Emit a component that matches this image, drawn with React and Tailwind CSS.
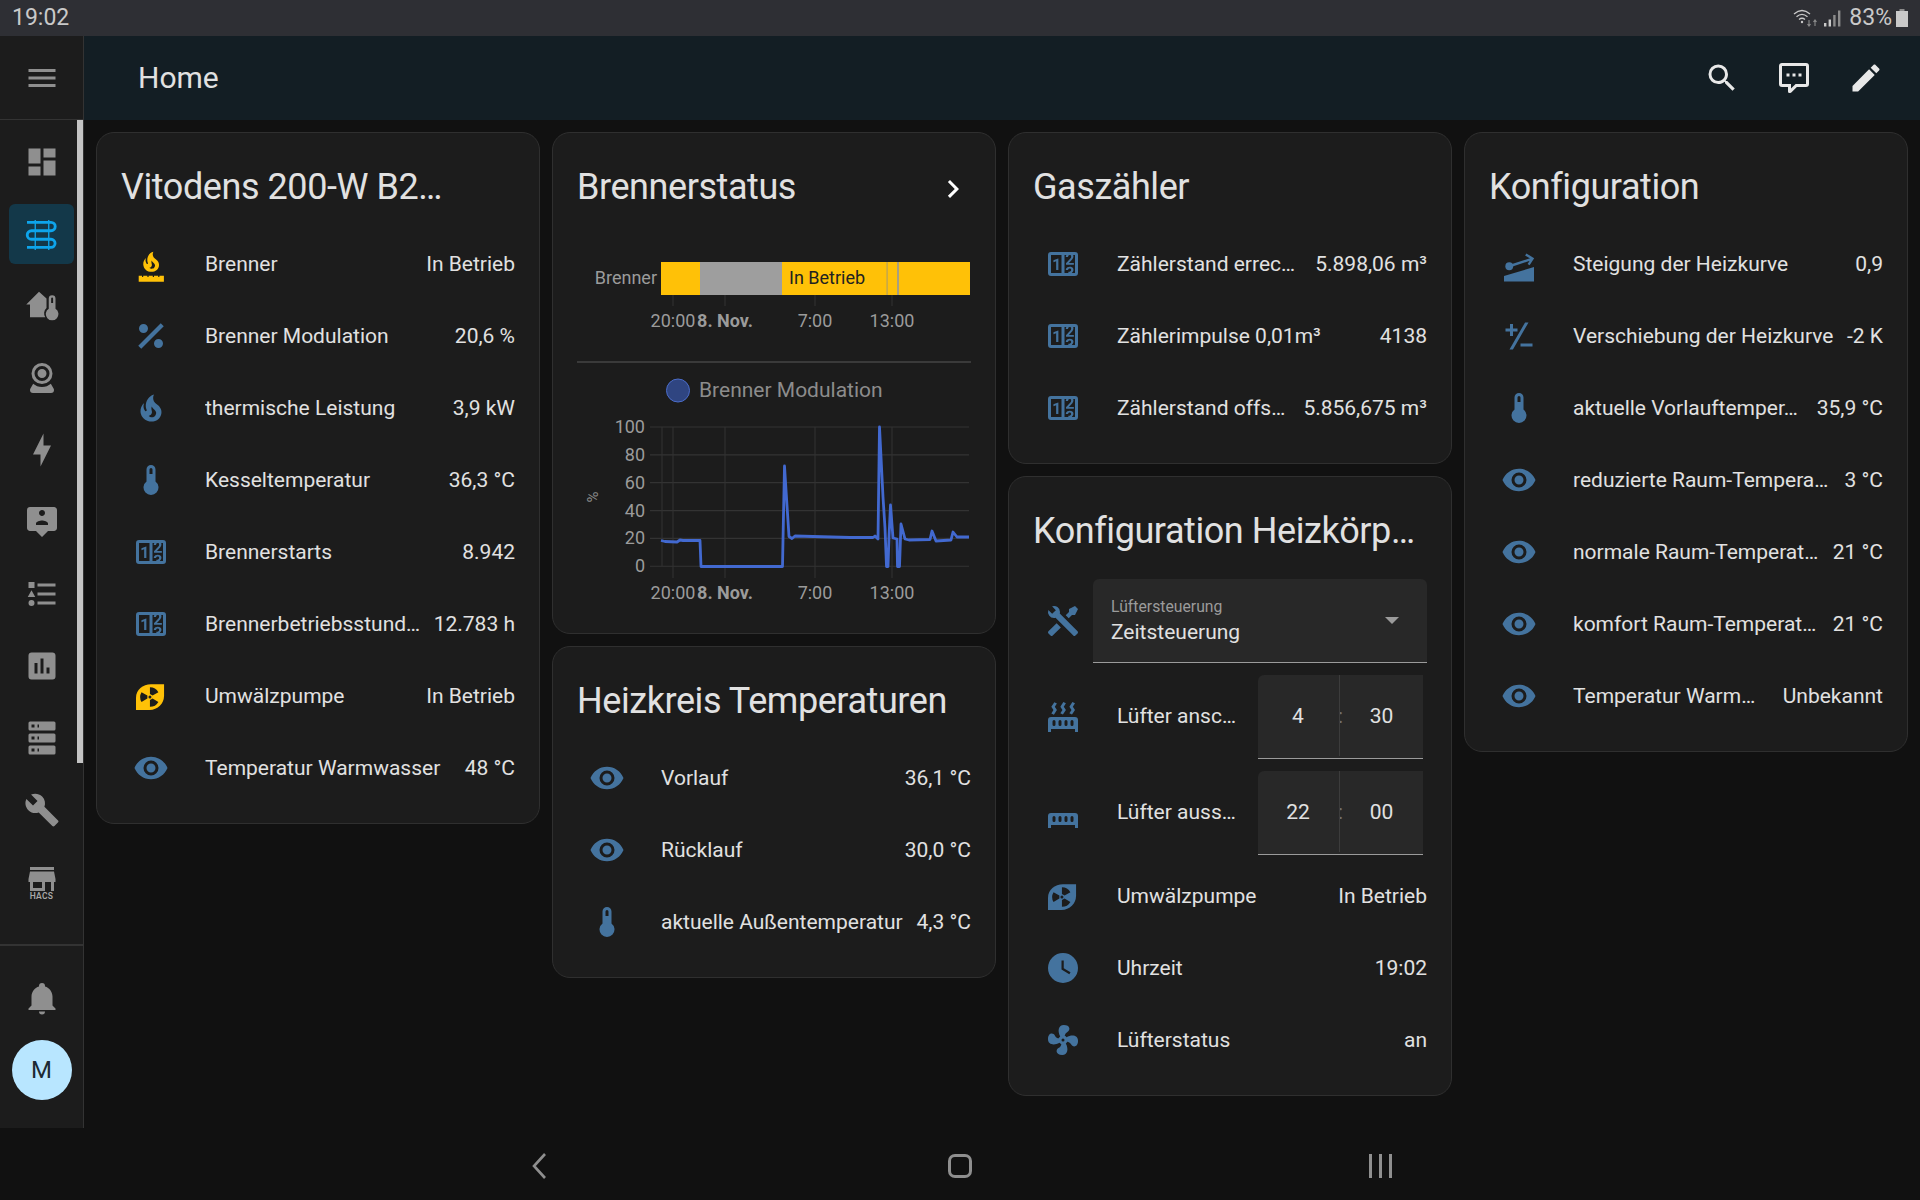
import React from "react";

// mdi icon paths
const P = {
  dashboard: "M13,3V9H21V3M13,21H21V11H13M3,21H11V15H3M3,13H11V3H3V13Z",
  webcam: "M12,2A7,7 0 0,1 19,9A7,7 0 0,1 12,16A7,7 0 0,1 5,9A7,7 0 0,1 12,2M12,4A5,5 0 0,0 7,9A5,5 0 0,0 12,14A5,5 0 0,0 17,9A5,5 0 0,0 12,4M12,6A3,3 0 0,1 15,9A3,3 0 0,1 12,12A3,3 0 0,1 9,9A3,3 0 0,1 12,6M6,22A2,2 0 0,1 4,20C4,19.62 4.1,19.27 4.29,18.97L6.11,15.81C7.69,17.17 9.75,18 12,18C14.25,18 16.31,17.17 17.89,15.81L19.71,18.97C19.9,19.27 20,19.62 20,20A2,2 0 0,1 18,22H6Z",
  bolt: "M11 15H6L13 1V9H18L11 23V15Z",
  tooltipAccount: "M2 4C2 2.89 2.9 2 4 2H20C21.11 2 22 2.9 22 4V16C22 17.11 21.11 18 20 18H16L12 22L8 18H4C2.9 18 2 17.11 2 16V4M16 14V13C16 11.67 13.33 11 12 11S8 11.67 8 13V14H16M12 4C10.9 4 10 4.9 10 6S10.9 8 12 8 14 7.11 14 6 13.11 4 12 4Z",
  listType: "M5,9.5L7.5,14H2.5L5,9.5M3,4H7V8H3V4M5,20A2,2 0 0,0 7,18A2,2 0 0,0 5,16A2,2 0 0,0 3,18A2,2 0 0,0 5,20M9,5V7H21V5H9M9,19H21V17H9V19M9,13H21V11H9V13Z",
  chartBox: "M9 17H7V10H9V17M13 17H11V7H13V17M17 17H15V13H17V17M19 3H5C3.89 3 3 3.89 3 5V19A2 2 0 0 0 5 21H19A2 2 0 0 0 21 19V5C21 3.89 20.1 3 19 3Z",
  server: "M4,1H20A1,1 0 0,1 21,2V6A1,1 0 0,1 20,7H4A1,1 0 0,1 3,6V2A1,1 0 0,1 4,1M4,9H20A1,1 0 0,1 21,10V14A1,1 0 0,1 20,15H4A1,1 0 0,1 3,14V10A1,1 0 0,1 4,9M4,17H20A1,1 0 0,1 21,18V22A1,1 0 0,1 20,23H4A1,1 0 0,1 3,22V18A1,1 0 0,1 4,17M9,5H10V3H9V5M9,13H10V11H9V13M9,21H10V19H9V21M5,3V5H7V3H5M5,11V13H7V11H5M5,19V21H7V19H5Z",
  wrench: "M22.7,19L13.6,9.9C14.5,7.6 14,4.9 12.1,3C10.1,1 7.1,0.6 4.7,1.7L9,6L6,9L1.6,4.7C0.4,7.1 0.9,10.1 2.9,12.1C4.8,14 7.5,14.5 9.8,13.6L18.9,22.7C19.3,23.1 19.9,23.1 20.3,22.7L22.6,20.4C23.1,20 23.1,19.3 22.7,19Z",
  store: "M12,18H6V14H12M21,14V12L20,7H4L3,12V14H4V20H14V14H18V20H20V14M20,4H4V6H20V4Z",
  bell: "M21,19V20H3V19L5,17V11C5,7.9 7.03,5.17 10,4.29C10,4.19 10,4.1 10,4A2,2 0 0,1 12,2A2,2 0 0,1 14,4C14,4.1 14,4.19 14,4.29C16.97,5.17 19,7.9 19,11V17L21,19M14,21A2,2 0 0,1 12,23A2,2 0 0,1 10,21",
  menu: "M3,6H21V8H3V6M3,11H21V13H3V11M3,16H21V18H3V16Z",
  magnify: "M9.5,3A6.5,6.5 0 0,1 16,9.5C16,11.11 15.41,12.59 14.44,13.73L14.71,14H15.5L20.5,19L19,20.5L14,15.5V14.71L13.73,14.44C12.59,15.41 11.11,16 9.5,16A6.5,6.5 0 0,1 3,9.5A6.5,6.5 0 0,1 9.5,3M9.5,5C7,5 5,7 5,9.5C5,12 7,14 9.5,14C12,14 14,12 14,9.5C14,7 12,5 9.5,5Z",
  comment: "M9,22A1,1 0 0,1 8,21V18H4A2,2 0 0,1 2,16V4C2,2.89 2.9,2 4,2H20A2,2 0 0,1 22,4V16A2,2 0 0,1 20,18H13.9L10.2,21.71C10,21.9 9.75,22 9.5,22H9M10,16V19.08L13.08,16H20V4H4V16H10M17,11H15V9H17V11M13,11H11V9H13V11M9,11H7V9H9V11Z",
  pencil: "M20.71,7.04C21.1,6.65 21.1,6 20.71,5.63L18.37,3.29C18,2.9 17.35,2.9 16.96,3.29L15.12,5.12L18.87,8.87M3,17.25V21H6.75L17.81,9.93L14.06,6.18L3,17.25Z",
  chevron: "M8.59,16.58L13.17,12L8.59,7.41L10,6L16,12L10,18L8.59,16.58Z",
  percent: "M18.5,3.5L3.5,18.5L5.5,20.5L20.5,5.5M7,4A3,3 0 0,0 4,7A3,3 0 0,0 7,10A3,3 0 0,0 10,7A3,3 0 0,0 7,4M17,14A3,3 0 0,0 14,17A3,3 0 0,0 17,20A3,3 0 0,0 20,17A3,3 0 0,0 17,14Z",
  fire: "M17.66 11.2C17.43 10.9 17.15 10.64 16.89 10.38C16.22 9.78 15.46 9.35 14.82 8.72C13.33 7.26 13 4.85 13.95 3C13 3.23 12.17 3.75 11.46 4.32C8.87 6.4 7.85 10.07 9.07 13.22C9.11 13.32 9.15 13.42 9.15 13.55C9.15 13.77 9 13.97 8.8 14.05C8.57 14.15 8.33 14.09 8.14 13.93C8.08 13.88 8.04 13.83 8 13.76C6.87 12.33 6.69 10.28 7.45 8.64C5.78 10 4.87 12.3 5 14.47C5.06 14.97 5.12 15.47 5.29 15.97C5.43 16.57 5.7 17.17 6 17.7C7.08 19.43 8.95 20.67 10.96 20.92C13.1 21.19 15.39 20.8 17.03 19.32C18.86 17.66 19.5 15 18.56 12.72L18.43 12.46C18.22 12 17.66 11.2 17.66 11.2M14.5 17.5C14.22 17.74 13.76 18 13.4 18.1C12.28 18.5 11.16 17.94 10.5 17.28C11.69 17 12.4 16.12 12.61 15.23C12.78 14.43 12.46 13.77 12.33 13C12.21 12.26 12.23 11.63 12.5 10.94C12.69 11.32 12.89 11.7 13.13 12C13.9 13 15.11 13.44 15.37 14.8C15.41 14.94 15.43 15.08 15.43 15.23C15.46 16.05 15.1 16.95 14.5 17.5H14.5Z",
  thermometer: "M15 13V5A3 3 0 0 0 9 5V13A5 5 0 1 0 15 13M12 4A1 1 0 0 1 13 5V8H11V5A1 1 0 0 1 12 4Z",
  counter: "M4,4H20A2,2 0 0,1 22,6V18A2,2 0 0,1 20,20H4A2,2 0 0,1 2,18V6A2,2 0 0,1 4,4M4,6V18H11V6H4M20,18V6H18.76C19,6.54 18.95,7.07 18.95,7.13C18.88,7.8 18.41,8.5 18.24,8.75L15.91,11.3L19.23,11.28L19.24,12.5L14.04,12.47L14,11.47C14,11.47 17.05,8.24 17.2,7.95C17.34,7.67 17.91,6 16.5,6C15.27,6.05 15.41,7.3 15.41,7.3L13.87,7.31C13.87,7.31 13.88,6.65 14.25,6H13V18H15.58L15.57,17.14L16.54,17.13C16.54,17.13 17.45,16.97 17.46,16.08C17.5,15.08 16.65,15.08 16.5,15.08C16.37,15.08 15.43,15.13 15.43,15.95H13.91C13.91,15.95 13.95,13.89 16.5,13.89C19.1,13.89 18.96,15.91 18.96,15.91C18.96,15.91 19,17.16 17.85,17.63L18.37,18H20M8.92,16H7.42V10.2L5.62,10.76V9.53L8.76,8.41H8.92V16Z",
  eye: "M12,9A3,3 0 0,0 9,12A3,3 0 0,0 12,15A3,3 0 0,0 15,12A3,3 0 0,0 12,9M12,17A5,5 0 0,1 7,12A5,5 0 0,1 12,7A5,5 0 0,1 17,12A5,5 0 0,1 12,17M12,4.5C7,4.5 2.73,7.61 1,12C2.73,16.39 7,19.5 12,19.5C17,19.5 21.27,16.39 23,12C21.27,7.61 17,4.5 12,4.5Z",
  tools: "M21.71 20.29L20.29 21.71A1 1 0 0 1 18.88 21.71L7 9.85A3.81 3.81 0 0 1 6 10A4 4 0 0 1 2.22 4.7L4.76 7.24L5.29 6.71L6.71 5.29L7.24 4.76L4.7 2.22A4 4 0 0 1 10 6A3.81 3.81 0 0 1 9.85 7L21.71 18.88A1 1 0 0 1 21.71 20.29M2.29 18.88A1 1 0 0 0 2.29 20.29L3.71 21.71A1 1 0 0 0 5.12 21.71L10.59 16.25L7.76 13.42M20 2L16 4V6L13.83 8.17L15.83 10.17L18 8H20L22 4Z",
  radiator: "M7.95,3L6.53,5.19L7.95,7.4H7.94L5.95,10.5L4.22,9.6L5.64,7.39L4.22,5.19L6.22,2.09L7.95,3M13.95,2.89L12.53,5.1L13.95,7.3L13.94,7.31L11.95,10.4L10.22,9.5L11.64,7.3L10.22,5.1L12.22,2L13.95,2.89M20,2.89L18.56,5.1L20,7.3V7.31L18,10.4L16.25,9.5L17.67,7.3L16.25,5.1L18.25,2L20,2.89M2,22V14A2,2 0 0,1 4,12H20A2,2 0 0,1 22,14V22H20V20H4V22H2M6,14A1,1 0 0,0 5,15V17A1,1 0 0,0 6,18A1,1 0 0,0 7,17V15A1,1 0 0,0 6,14M10,14A1,1 0 0,0 9,15V17A1,1 0 0,0 10,18A1,1 0 0,0 11,17V15A1,1 0 0,0 10,14M14,14A1,1 0 0,0 13,15V17A1,1 0 0,0 14,18A1,1 0 0,0 15,17V15A1,1 0 0,0 14,14M18,14A1,1 0 0,0 17,15V17A1,1 0 0,0 18,18A1,1 0 0,0 19,17V15A1,1 0 0,0 18,14Z",
  radiatorOff: "M2,22V14A2,2 0 0,1 4,12H20A2,2 0 0,1 22,14V22H20V20H4V22H2M6,14A1,1 0 0,0 5,15V17A1,1 0 0,0 6,18A1,1 0 0,0 7,17V15A1,1 0 0,0 6,14M10,14A1,1 0 0,0 9,15V17A1,1 0 0,0 10,18A1,1 0 0,0 11,17V15A1,1 0 0,0 10,14M14,14A1,1 0 0,0 13,15V17A1,1 0 0,0 14,18A1,1 0 0,0 15,17V15A1,1 0 0,0 14,14M18,14A1,1 0 0,0 17,15V17A1,1 0 0,0 18,18A1,1 0 0,0 19,17V15A1,1 0 0,0 18,14Z",
  clock: "M12,2A10,10 0 0,0 2,12A10,10 0 0,0 12,22A10,10 0 0,0 22,12A10,10 0 0,0 12,2M16.2,16.2L11,13V7H12.5V12.2L17,14.9L16.2,16.2Z",
  fan: "M12,11A1,1 0 0,0 11,12A1,1 0 0,0 12,13A1,1 0 0,0 13,12A1,1 0 0,0 12,11M12.5,2C17,2 17.11,5.57 14.75,6.75C13.76,7.24 13.32,8.29 13.13,9.22C13.61,9.42 14.03,9.73 14.35,10.13C18.05,8.13 22.03,8.92 22.03,12.5C22.03,17 18.46,17.1 17.28,14.73C16.78,13.74 15.72,13.3 14.79,13.11C14.59,13.59 14.28,14 13.88,14.34C15.87,18.03 15.08,22 11.5,22C7,22 6.91,18.42 9.27,17.24C10.25,16.75 10.69,15.71 10.89,14.79C10.4,14.59 9.97,14.27 9.65,13.87C5.96,15.85 2,15.07 2,11.5C2,7 5.56,6.89 6.74,9.26C7.24,10.25 8.29,10.68 9.22,10.87C9.41,10.39 9.73,9.97 10.14,9.65C8.15,5.96 8.94,2 12.5,2Z",
  plusMinus: "M3,7H6V4H8V7H11V9H8V12H6V9H3V7M21,17V19H13V17H21M16.04,3H18.35L7.96,21H5.65L16.04,3Z",
};

function Icon({ d, className = "", children }) {
  return (
    <svg viewBox="0 0 24 24" fill="currentColor" className={"block w-9 h-9 " + className}>
      {d && <path d={d} />}
      {children}
    </svg>
  );
}

const HeatingCoil = ({ className }) => (
  <Icon className={className}>
    <path
      d="M2 4.2H18a2.8 2.8 0 0 1 0 5.6H5a2.85 2.85 0 0 0 0 5.7H18a2.7 2.7 0 0 1 0 5.4H2"
      fill="none"
      stroke="currentColor"
      strokeWidth="1.9"
    />
    <path d="M7.5 2.6V22.6M16.5 2.6V22.6" fill="none" stroke="currentColor" strokeWidth="0.9" />
  </Icon>
);

const HomeThermometer = ({ className }) => (
  <Icon className={className}>
    <path d="M10 2.5L1.5 11H4V19.5H14.2A4.6 4.6 0 0 1 15 13.4V7Z" />
    <path
      d="M16.5 13.8V7a2.25 2.25 0 0 1 4.5 0V13.8A4.2 4.2 0 1 1 16.5 13.8ZM18.1 7V10H19.4V7a.65 .65 0 0 0 -1.3 0Z"
      fillRule="evenodd"
    />
  </Icon>
);

const GasBurner = ({ className }) => (
  <Icon className={className}>
    <g transform="translate(3.1 1.5) scale(.75)">
      <path d={P.fire} />
    </g>
    <path d="M3.8 23.8V19.8H6V20.7H6.8V19.8H9.6V20.7H10.4V19.8H13.2V20.7H14V19.8H16.8V20.7H17.6V19.8H20.6V23.8Z" />
  </Icon>
);

const Pump = ({ className }) => (
  <Icon className={className}>
    <path d="M20.7 4.2V12C20.7 17 16.5 21.3 11 21.3H2V13C2 8 6.5 4.2 12 4.2Z" />
    <g fill="#1c1c1c" transform="translate(-0.7 0.7)">
      <path d="M10.27 11L6.37 8.75A6.5 6.5 0 0 0 6.37 15.25L10.27 13Z" />
      <path d="M12 10L12 5.5A6.5 6.5 0 0 1 17.63 8.75L13.73 11Z" />
      <path d="M13.73 13L17.63 15.25A6.5 6.5 0 0 1 12 18.5L12 14Z" />
      <circle cx="12" cy="12" r="1" />
    </g>
  </Icon>
);

const Slope = ({ className }) => (
  <Icon className={className}>
    <path d="M2 23.7V20L22 14V23.7Z" />
    <circle cx="5.5" cy="13.5" r="2.6" />
    <path d="M5.5 13.5L20.5 8.6M16.5 5.6L21 8.4L18.4 12.4" fill="none" stroke="currentColor" strokeWidth="1.6" />
  </Icon>
);

const navItems = [
  { d: P.dashboard },
  { Comp: HeatingCoil, active: true },
  { Comp: HomeThermometer },
  { d: P.webcam },
  { d: P.bolt },
  { d: P.tooltipAccount },
  { d: P.listType },
  { d: P.chartBox },
  { d: P.server },
  { d: P.wrench },
];

const blue = "text-[#44739e]";
const gold = "text-[#ffc107]";

function Row({ icon, Comp, name, value, color = blue }) {
  return (
    <div className="flex items-center h-[60px] mb-3 last:mb-0">
      <div className={"w-[60px] flex justify-center shrink-0 " + color}>
        {Comp ? <Comp /> : <Icon d={icon} />}
      </div>
      <div className="ml-6 flex-1 min-w-0 truncate">{name}</div>
      {value && <div className="ml-3 whitespace-nowrap text-right">{value}</div>}
    </div>
  );
}

function Card({ title, chevron, children }) {
  return (
    <div className="bg-[#1c1c1c] border border-[#2f2f2f] rounded-[18px] px-6 pb-[25px] text-[21px] leading-[30px] text-[#e1e1e1]">
      <div className="h-[101px] pt-[18px] flex items-start justify-between">
        <div className="h-[72px] leading-[72px] text-[36px] tracking-[-0.012em] whitespace-nowrap">{title}</div>
        {chevron && (
          <div className="h-[72px] flex items-center">
            <Icon d={P.chevron} className="text-white mt-1" />
          </div>
        )}
      </div>
      {children}
    </div>
  );
}

function TimeRow({ icon, name, h, m, className = "" }) {
  return (
    <div className={"flex items-center h-[84px] " + className}>
      <div className={"w-[60px] flex justify-center shrink-0 " + blue}>
        <Icon d={icon} />
      </div>
      <div className="ml-6 flex-1 min-w-0 truncate -mt-[2px]">{name}</div>
      <div className="w-[165px] h-[84px] mr-1 pb-[2px] bg-[#282828] rounded-tl-[6px] border-b border-[#9b9b9b] flex items-center">
        <span className="w-[80px] text-center">{h}</span>
        <span className="w-[2px] text-[#6f6f6f]">:</span>
        <span className="h-full w-px bg-[#3c3c3c] ml-[-1px]"></span>
        <span className="flex-1 text-center">{m}</span>
      </div>
    </div>
  );
}

// Kurve in Koordinaten des Screenshots
const curve = [
  [661, 540.5], [665, 541.5], [677, 542], [680, 540], [683, 540.5], [700, 540.5], [701, 566.5], [782.5, 566.5],
  [783, 540], [784.5, 466], [786, 490], [789, 536.5], [792, 538.5], [795, 536], [813, 536.5], [850, 537.5],
  [873, 537.5], [875, 536], [878, 539], [879.5, 427], [883, 497], [885, 528], [886.5, 566.5], [888, 566.5],
  [889, 537], [890.5, 505], [893, 538], [897, 539], [897.5, 566.5], [899.5, 566.5], [901, 524], [905, 539],
  [909, 540], [930, 539.5], [932, 531], [936, 541], [951, 540], [953, 532], [957, 537], [969, 537],
];

const ticks = [
  { x: 673, label: "20:00" },
  { x: 725, label: "8. Nov.", bold: true },
  { x: 815, label: "7:00" },
  { x: 892, label: "13:00" },
];

function TimelineChart() {
  return (
    <svg viewBox="577 234 394 127" className="block w-[394px] h-[127px] font-[Roboto,sans-serif]">
      <text x="657" y="284" textAnchor="end" fontSize="18" fill="#9b9b9b">Brenner</text>
      <rect x="661" y="262" width="309" height="33" fill="#ffc107" />
      <rect x="700" y="262" width="82" height="33" fill="#9e9e9e" />
      <rect x="886.5" y="262" width="1.2" height="33" fill="#b5a05c" />
      <rect x="897" y="262" width="2" height="33" fill="#a89f80" />
      <text x="789" y="284" fontSize="18" fill="#212121">In Betrieb</text>
      {ticks.map((t) => (
        <g key={t.label}>
          <line x1={t.x} x2={t.x} y1="295" y2="306" stroke="#333" />
          <text x={t.x} y="327" textAnchor="middle" fontSize="18" fill="#9b9b9b" fontWeight={t.bold ? 700 : 400}>
            {t.label}
          </text>
        </g>
      ))}
    </svg>
  );
}

function LineChart() {
  const yTicks = [100, 80, 60, 40, 20, 0];
  return (
    <svg viewBox="577 363 394 245" className="block w-[394px] h-[245px] font-[Roboto,sans-serif]">
      <circle cx="678" cy="390.5" r="11.5" fill="#2f4581" stroke="#4b6cc8" strokeWidth="1" />
      <text x="699" y="396.5" fontSize="21" fill="#8c8c8c">Brenner Modulation</text>
      {yTicks.map((v, i) => {
        const y = 427 + i * 27.85;
        return (
          <g key={v}>
            <line x1="650" x2="969" y1={y} y2={y} stroke="#333" strokeWidth="1.2" />
            <text x="645" y={y + 6} textAnchor="end" fontSize="18" fill="#9b9b9b">{v}</text>
          </g>
        );
      })}
      <line x1="662" x2="662" y1="427" y2="566" stroke="#333" />
      {ticks.map((t) => (
        <g key={t.label}>
          <line x1={t.x} x2={t.x} y1="427" y2="578" stroke="#333" />
          <text x={t.x} y="599" textAnchor="middle" fontSize="18" fill="#9b9b9b" fontWeight={t.bold ? 700 : 400}>
            {t.label}
          </text>
        </g>
      ))}
      <text transform="translate(598 497) rotate(-90)" textAnchor="middle" fontSize="15" fill="#8c8c8c">%</text>
      <polyline
        points={curve.map((p) => p.join(",")).join(" ")}
        fill="none"
        stroke="#4269d0"
        strokeWidth="2.8"
        strokeLinejoin="round"
      />
    </svg>
  );
}

function Sidebar() {
  return (
    <div className="w-[84px] shrink-0 bg-[#1c1c1c] border-r border-[#333] flex flex-col text-[#8f8f8f]">
      <div className="h-[84px] shrink-0 border-b border-[#333] flex items-center justify-center">
        <Icon d={P.menu} />
      </div>
      <div className="relative flex-1 pt-3 border-b-2 border-[#333]">
        {navItems.map((n, i) => (
          <div
            key={i}
            className={
              "mx-[9px] h-[60px] mb-3 rounded-[6px] flex items-center justify-center " +
              (n.active ? "bg-[#133849] text-[#0ea5ec]" : "")
            }
          >
            {n.Comp ? <n.Comp /> : <Icon d={n.d} />}
          </div>
        ))}
        <div className="mx-[9px] h-[60px] flex flex-col items-center pt-[9px]">
          <Icon d={P.store} />
          <span className="-mt-[6px] text-[8.5px] leading-[10px] font-semibold tracking-[0.3px] text-[#a8a8a8]">HACS</span>
        </div>
        <div className="absolute right-0 top-0 w-[6px] h-[643px] bg-[#c4c4c4]"></div>
      </div>
      <div className="h-[182px] shrink-0 flex flex-col items-center pt-[23px]">
        <Icon d={P.bell} className="mt-[11px]" />
        <div className="mt-[24px] w-[60px] h-[60px] rounded-full bg-[#b8e6ff] text-[#1c2a33] text-[24px] flex items-center justify-center">
          M
        </div>
      </div>
    </div>
  );
}

export default function App() {
  return (
    <div className="w-[1920px] h-[1200px] flex flex-col overflow-hidden bg-[#111111] font-[Roboto,sans-serif]">
      {/* status bar */}
      <div className="h-9 shrink-0 bg-[#2e2f34] flex items-center justify-between pl-3 pr-3 text-[23px] text-[#c9c9c9]">
        <span>19:02</span>
        <div className="flex items-center">
          <svg viewBox="0 0 26 20" className="w-[26px] h-[20px]" fill="none" stroke="#c9c9c9" strokeWidth="1.3">
            <path d="M1 6Q9 -1 17 6M3.5 8.8Q9 4 14.5 8.8M6 11.5Q9 9 12 11.5" />
            <circle cx="9" cy="14" r="1.2" fill="#c9c9c9" stroke="none" />
            <path d="M16 12V18M14.5 16L16 18L17.5 16M22 18V12M20.5 14L22 12L23.5 14" stroke="#8c8c8c" strokeWidth="1.1" />
          </svg>
          <svg viewBox="0 0 17 17" className="w-[17px] h-[17px] ml-[5px]" fill="#c9c9c9">
            <rect x="0" y="13" width="2.4" height="3.5" />
            <rect x="4.6" y="9.5" width="2.4" height="7" />
            <rect x="9.2" y="5" width="2.4" height="11.5" fill="#8c8c8c" />
            <rect x="14" y="0.5" width="2.4" height="16" fill="#8c8c8c" />
          </svg>
          <span className="ml-2">83%</span>
          <svg viewBox="0 0 12 18" className="w-[12px] h-[18px] ml-[4px]" fill="#c9c9c9">
            <rect x="3.5" y="0" width="5" height="2" fill="#8c8c8c" />
            <rect x="0" y="2" width="12" height="16" />
          </svg>
        </div>
      </div>

      <div className="flex-1 min-h-0 flex">
        <Sidebar />
        <div className="flex-1 min-w-0 flex flex-col">
          <div className="h-[84px] shrink-0 bg-[#131e24] flex items-center pl-[54px] pr-[36px] text-[#e1e1e1]">
            <div className="flex-1 text-[30px] -mt-[2px]">Home</div>
            <div className="flex items-center gap-9">
              <Icon d={P.magnify} className="text-[#e8e8e8]" />
              <Icon d={P.comment} className="text-[#e8e8e8]" />
              <Icon d={P.pencil} className="text-[#e8e8e8]" />
            </div>
          </div>

          <div className="flex-1 min-h-0 p-3 grid grid-cols-4 gap-3 items-start">
            <Card title="Vitodens 200-W B2…">
              <Row Comp={GasBurner} color={gold} name="Brenner" value="In Betrieb" />
              <Row icon={P.percent} name="Brenner Modulation" value="20,6 %" />
              <Row icon={P.fire} name="thermische Leistung" value="3,9 kW" />
              <Row icon={P.thermometer} name="Kesseltemperatur" value="36,3 °C" />
              <Row icon={P.counter} name="Brennerstarts" value="8.942" />
              <Row icon={P.counter} name="Brennerbetriebsstund…" value="12.783 h" />
              <Row Comp={Pump} color={gold} name="Umwälzpumpe" value="In Betrieb" />
              <Row icon={P.eye} name="Temperatur Warmwasser" value="48 °C" />
            </Card>

            <div className="flex flex-col gap-3">
              <Card title="Brennerstatus" chevron>
                <TimelineChart />
                <div className="h-[2px] bg-[#3a3a3a]"></div>
                <LineChart />
              </Card>
              <Card title="Heizkreis Temperaturen">
                <Row icon={P.eye} name="Vorlauf" value="36,1 °C" />
                <Row icon={P.eye} name="Rücklauf" value="30,0 °C" />
                <Row icon={P.thermometer} name="aktuelle Außentemperatur" value="4,3 °C" />
              </Card>
            </div>

            <div className="flex flex-col gap-3">
              <Card title="Gaszähler">
                <Row icon={P.counter} name="Zählerstand errec…" value="5.898,06 m³" />
                <Row icon={P.counter} name="Zählerimpulse 0,01m³" value="4138" />
                <Row icon={P.counter} name="Zählerstand offs…" value="5.856,675 m³" />
              </Card>
              <Card title="Konfiguration Heizkörp…">
                <div className="flex items-center h-[84px] mt-[1px] mb-3">
                  <div className={"w-[60px] flex justify-center shrink-0 " + blue}>
                    <Icon d={P.tools} />
                  </div>
                  <div className="flex-1 h-[84px] bg-[#282828] rounded-t-[6px] border-b border-[#9b9b9b] pl-[18px] pr-[28px] flex items-center justify-between">
                    <div>
                      <div className="text-[15.75px] leading-[20px] text-[#9b9b9b] mt-[2px]">Lüftersteuerung</div>
                      <div className="leading-[30px]">Zeitsteuerung</div>
                    </div>
                    <div className="w-0 h-0 border-x-[7.5px] border-x-transparent border-t-[7.5px] border-t-[#9b9b9b]"></div>
                  </div>
                </div>
                <TimeRow icon={P.radiator} name="Lüfter ansc…" h="4" m="30" className="mb-3" />
                <TimeRow icon={P.radiatorOff} name="Lüfter auss…" h="22" m="00" className="mb-[11px]" />
                <Row Comp={Pump} name="Umwälzpumpe" value="In Betrieb" />
                <Row icon={P.clock} name="Uhrzeit" value="19:02" />
                <Row icon={P.fan} name="Lüfterstatus" value="an" />
              </Card>
            </div>

            <Card title="Konfiguration">
              <Row Comp={Slope} name="Steigung der Heizkurve" value="0,9" />
              <Row icon={P.plusMinus} name="Verschiebung der Heizkurve" value="-2 K" />
              <Row icon={P.thermometer} name="aktuelle Vorlauftemper…" value="35,9 °C" />
              <Row icon={P.eye} name="reduzierte Raum-Tempera…" value="3 °C" />
              <Row icon={P.eye} name="normale Raum-Temperat…" value="21 °C" />
              <Row icon={P.eye} name="komfort Raum-Temperat…" value="21 °C" />
              <Row icon={P.eye} name="Temperatur Warm…" value="Unbekannt" />
            </Card>
          </div>
        </div>
      </div>

      {/* android nav bar */}
      <div className="h-[72px] shrink-0 bg-[#111111] flex items-center pt-1">
        <div className="w-[1920px] flex items-center text-[#8f8f8f]">
          <div className="w-[547px] flex justify-end">
            <svg viewBox="0 0 16 28" className="w-4 h-7" fill="none" stroke="currentColor" strokeWidth="2.6">
              <path d="M14 2L3 14L14 26" />
            </svg>
          </div>
          <div className="ml-[401px] w-6 h-6 rounded-[7px] border-[3px] border-[#8f8f8f]"></div>
          <div className="ml-[397px] flex gap-[7px]">
            <span className="w-[3px] h-6 bg-[#8f8f8f]"></span>
            <span className="w-[3px] h-6 bg-[#8f8f8f]"></span>
            <span className="w-[3px] h-6 bg-[#8f8f8f]"></span>
          </div>
        </div>
      </div>
    </div>
  );
}
